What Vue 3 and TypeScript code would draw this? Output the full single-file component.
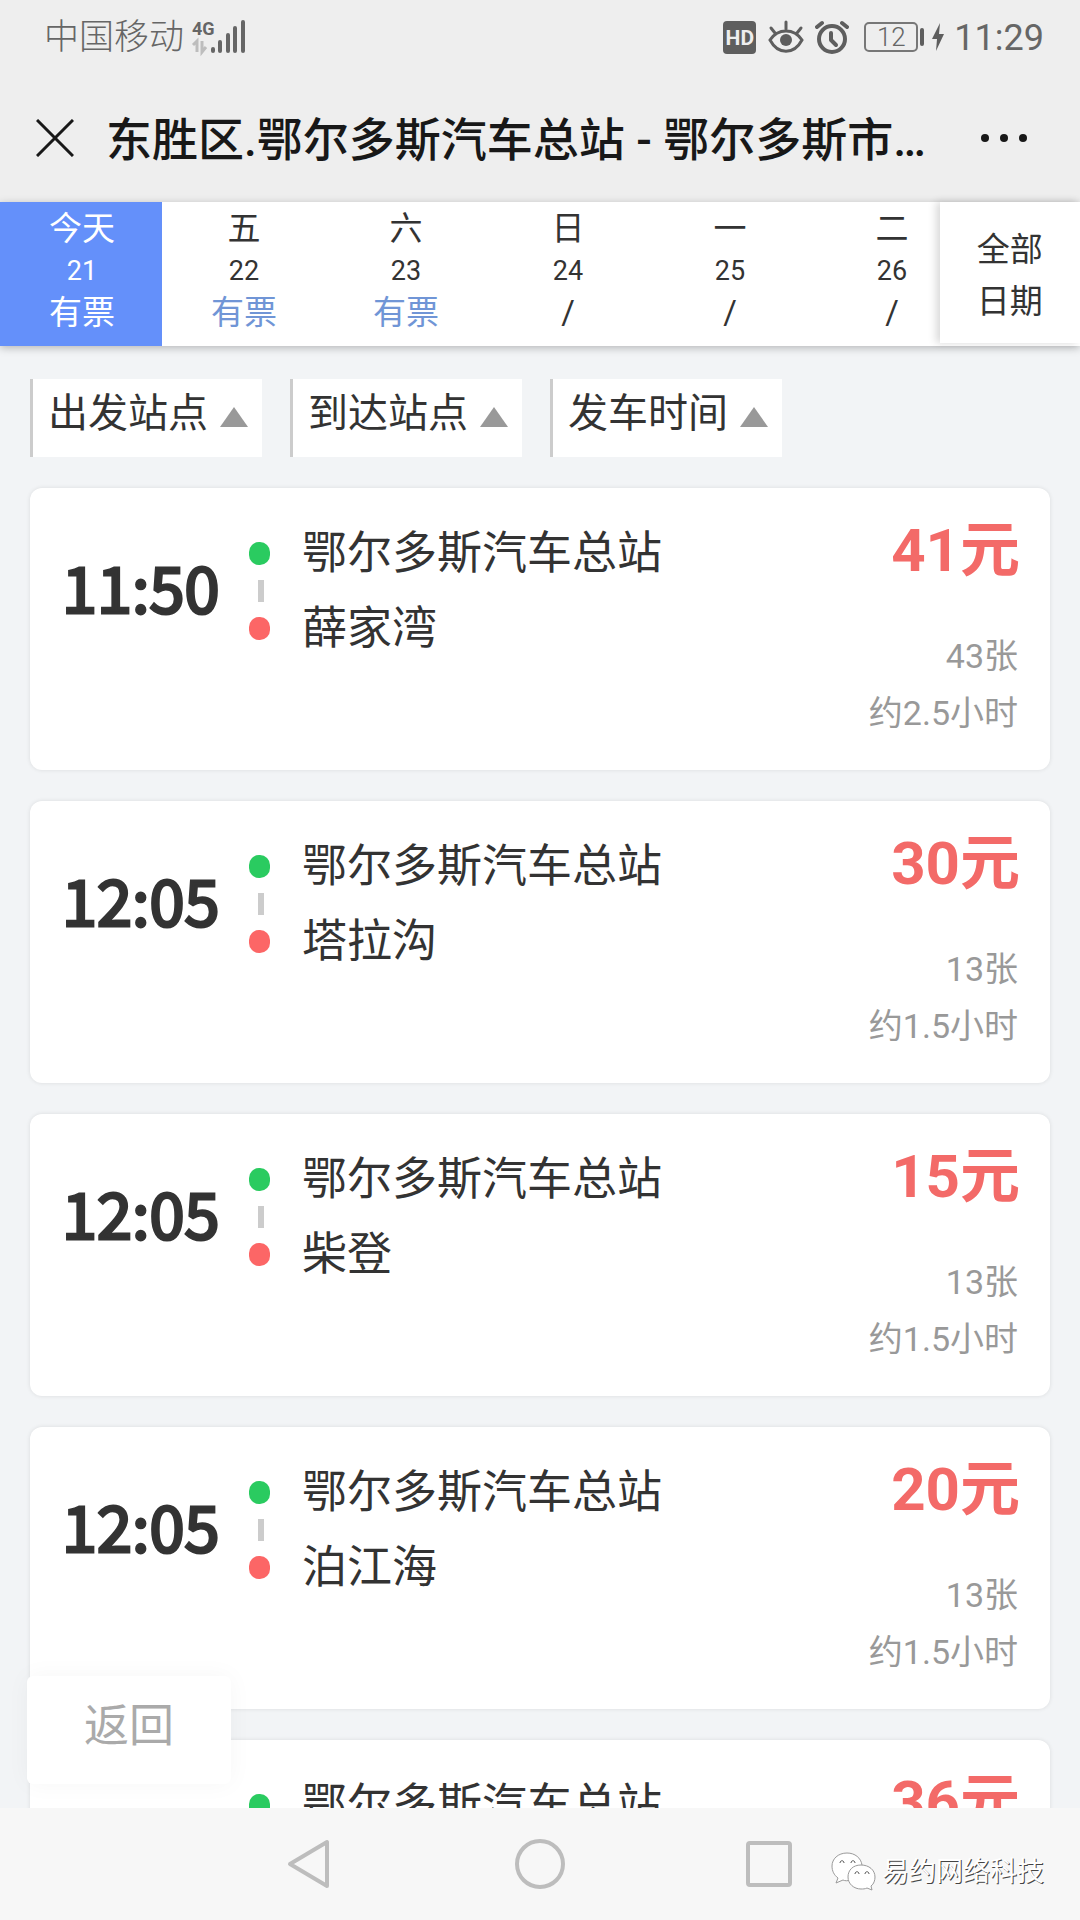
<script setup lang="ts">
interface Day {
  week: string
  date: string
  status: string
  available: boolean
}

interface Trip {
  time?: string
  from: string
  to?: string
  price: number
  tickets?: number
  hours?: string
}

const days: Day[] = [
  { week: '今天', date: '21', status: '有票', available: true },
  { week: '五', date: '22', status: '有票', available: true },
  { week: '六', date: '23', status: '有票', available: true },
  { week: '日', date: '24', status: '/', available: false },
  { week: '一', date: '25', status: '/', available: false },
  { week: '二', date: '26', status: '/', available: false },
]

const filters: string[] = ['出发站点', '到达站点', '发车时间']

const origin = '鄂尔多斯汽车总站'

const trips: Trip[] = [
  { time: '11:50', from: origin, to: '薛家湾', price: 41, tickets: 43, hours: '2.5' },
  { time: '12:05', from: origin, to: '塔拉沟', price: 30, tickets: 13, hours: '1.5' },
  { time: '12:05', from: origin, to: '柴登', price: 15, tickets: 13, hours: '1.5' },
  { time: '12:05', from: origin, to: '泊江海', price: 20, tickets: 13, hours: '1.5' },
  { from: origin, price: 36 },
]
</script>

<template>
  <div class="page">
    <div class="status">
      <span class="carrier">中国移动</span>
      <svg class="signal" width="54" height="34" viewBox="0 0 54 34">
        <text x="0" y="15" class="net">4G</text>
        <path d="M1 25 L5 21 V32 M10 21 V32 L14 27" fill="none" stroke="#bdbdbd" stroke-width="3" />
        <g stroke="#666" stroke-width="4" stroke-linecap="round">
          <path d="M21 29V31M28 22V31M36 15V31M43 8V31M51 2V31" />
        </g>
      </svg>
      <span class="spacer"></span>
      <span class="hd">HD</span>
      <svg class="eye" width="36" height="34" viewBox="0 0 36 34" fill="none" stroke="#5e5e5e" stroke-width="3" stroke-linecap="round">
        <path d="M2 20C10 8 26 8 34 20C26 35 10 35 2 20Z" />
        <circle cx="18" cy="20" r="6" fill="#5e5e5e" stroke="none" />
        <path d="M18 2V9M3 8L7 13M33 8L29 13" />
      </svg>
      <svg class="alarm" width="34" height="34" viewBox="0 0 34 34" fill="none" stroke="#5e5e5e" stroke-linecap="round" stroke-linejoin="round">
        <circle cx="17" cy="19" r="13" stroke-width="4" />
        <path d="M16 13V20L21 25" stroke-width="4" />
        <path d="M2 7L7 3M27 3L32 7" stroke-width="4" />
      </svg>
      <span class="battery">12</span>
      <span class="nub"></span>
      <svg class="bolt" width="14" height="28" viewBox="0 0 14 28"><path d="M9 0L1 16H6L5 28L13 11H8Z" fill="#5e5e5e" /></svg>
      <span class="clock">11:29</span>
    </div>

    <header class="header">
      <button class="icon-btn" aria-label="关闭">
        <svg width="38" height="38" viewBox="0 0 38 38"><path d="M1 1L37 37M37 1L1 37" stroke="#181818" stroke-width="3" /></svg>
      </button>
      <h1 class="title">东胜区.鄂尔多斯汽车总站 - 鄂尔多斯市…</h1>
      <button class="icon-btn more" aria-label="更多">
        <svg width="48" height="10" viewBox="0 0 48 10"><circle cx="5" cy="5" r="4" /><circle cx="24" cy="5" r="4" /><circle cx="43" cy="5" r="4" /></svg>
      </button>
    </header>

    <nav class="dates">
      <button v-for="(d, i) in days" :key="d.date" class="day" :class="{ active: i === 0, open: d.available }">
        <span>{{ d.week }}</span>
        <span class="num">{{ d.date }}</span>
        <span class="state">{{ d.status }}</span>
      </button>
      <button class="all-dates">全部<br />日期</button>
    </nav>

    <main class="content">
      <div class="filters">
        <button v-for="f in filters" :key="f" class="filter">
          <span>{{ f }}</span><i class="arrow"></i>
        </button>
      </div>

      <ul class="trips">
        <li v-for="(t, i) in trips" :key="i" class="trip">
          <time class="depart">{{ t.time }}</time>
          <div class="track"><i class="dot start"></i><i class="link"></i><i class="dot end"></i></div>
          <div class="stations">
            <span>{{ t.from }}</span>
            <span v-if="t.to">{{ t.to }}</span>
          </div>
          <div class="info">
            <strong class="price">{{ t.price }}元</strong>
            <span v-if="t.tickets" class="note">{{ t.tickets }}张</span>
            <span v-if="t.hours" class="note">约{{ t.hours }}小时</span>
          </div>
        </li>
      </ul>

      <button class="back">返回</button>
    </main>

    <footer class="navbar">
      <span></span>
      <button class="key" aria-label="后退">
        <svg width="50" height="50" viewBox="0 0 50 50"><path d="M6 25L43 3V47Z" /></svg>
      </button>
      <button class="key" aria-label="主页">
        <svg width="50" height="50" viewBox="0 0 50 50"><circle cx="25" cy="25" r="23" /></svg>
      </button>
      <button class="key" aria-label="最近任务">
        <svg width="50" height="50" viewBox="0 0 50 50"><rect x="4" y="4" width="42" height="42" rx="2" /></svg>
      </button>
      <div class="brand">
        <svg width="46" height="42" viewBox="0 0 46 42" stroke="#9a9a9a" stroke-width="1" fill="#fff">
          <path d="M16 2C7 2 1 8 1 15C1 20 3 24 7 27L5 32L12 29C14 30 17 30 19 29L31 14C30 7 24 2 16 2Z" />
          <path d="M30 14C22 14 17 19 17 26C17 33 23 38 30 38C32 38 34 38 36 37L41 39L40 35C43 33 44 29 44 26C44 19 38 14 30 14Z" />
          <path d="M9 12C9 9 13 9 13 12M20 12C20 9 24 9 24 12M24 23C24 20 28 20 28 23M34 23C34 20 38 20 38 23" fill="none" stroke="#555" />
        </svg>
        <span>易约网络科技</span>
      </div>
    </footer>
  </div>
</template>

<style>
body {
  margin: 0;
}
</style>

<style scoped>
.page {
  height: 100vh;
  display: flex;
  flex-direction: column;
  background: #f2f4f6;
  color: #333;
  font-family: Roboto, 'Noto Sans CJK SC', sans-serif;
}

button {
  border: 0;
  margin: 0;
  padding: 0;
  background: none;
  font: inherit;
  color: inherit;
}

svg {
  display: block;
}

.status {
  display: flex;
  align-items: center;
  height: 74px;
  padding: 0 36px 0 44px;
  background: #eee;
  color: #666;
}

.carrier {
  padding-top: 2px;
  font-size: 35px;
  font-weight: 300;
  line-height: 40px;
}

.signal {
  margin-left: 8px;
  overflow: visible;
}

.net {
  font-size: 18px;
  font-weight: 700;
  fill: #666;
}

.spacer {
  flex: 1;
}

.hd {
  width: 33px;
  height: 33px;
  border-radius: 4px;
  background: #5e5e5e;
  color: #eee;
  font-size: 21px;
  font-weight: 700;
  line-height: 34px;
  text-align: center;
}

.eye {
  margin-left: 12px;
}

.alarm {
  margin-left: 11px;
}

.battery {
  box-sizing: border-box;
  width: 54px;
  height: 30px;
  margin-left: 15px;
  border: 2px solid #777;
  border-radius: 5px;
  font-size: 26px;
  font-weight: 300;
  line-height: 26px;
  text-align: center;
}

.nub {
  width: 4px;
  height: 18px;
  margin-left: 2px;
  border-radius: 2px;
  background: #5e5e5e;
}

.bolt {
  margin: 0 9px 0 7px;
}

.clock {
  padding-top: 2px;
  font-size: 36px;
  line-height: 42px;
}

.header {
  display: flex;
  align-items: center;
  height: 128px;
  padding: 0 52px 0 36px;
  background: #eee;
  color: #181818;
}

.icon-btn {
  fill: #181818;
}

.title {
  flex: 1;
  margin: 0 0 0 32px;
  padding-top: 4px;
  font-size: 46px;
  font-weight: 500;
  line-height: 64px;
  white-space: nowrap;
}

.dates {
  position: relative;
  z-index: 1;
  display: flex;
  height: 144px;
  background: #fff;
  box-shadow: 0 2px 8px rgba(0, 0, 0, 0.25);
}

.day {
  flex: 0 0 15%;
  box-sizing: border-box;
  display: flex;
  flex-direction: column;
  padding: 6px 0 0 2px;
  font-size: 33px;
  line-height: 42px;
}

.day span {
  width: 100%;
  height: 42px;
}

.day .num {
  font-size: 27px;
}

.open .state {
  color: #7095d6;
}

.active,
.active .state {
  background: #6490fa;
  color: #fff;
}

.all-dates {
  position: absolute;
  top: 0;
  right: 0;
  width: 13%;
  height: 141px;
  padding-top: 6px;
  background: #fff;
  box-shadow: -4px 0 8px rgba(0, 0, 0, 0.15);
  font-size: 33px;
  line-height: 52px;
}

.content {
  position: relative;
  flex: 1;
  min-height: 0;
  overflow: hidden;
  padding: 33px 30px 0;
}

.filters {
  display: flex;
  gap: 28px;
}

.filter {
  display: flex;
  align-items: flex-start;
  height: 78px;
  padding: 0 14px 0 15px;
  border-left: 3px solid #ccc;
  background: #fff;
  font-size: 40px;
  line-height: 70px;
}

.arrow {
  margin: 28px 0 0 12px;
  border: solid transparent;
  border-width: 0 14px 20px;
  border-bottom-color: #999;
}

.trips {
  display: flex;
  flex-direction: column;
  gap: 31px;
  margin: 31px 0 0;
  padding: 0;
  list-style: none;
}

.trip {
  display: flex;
  box-sizing: border-box;
  height: 282px;
  padding: 26px 30px 0 32px;
  border-radius: 12px;
  background: #fff;
  box-shadow: 0 0 4px rgba(0, 0, 0, 0.1);
}

.depart {
  width: 187px;
  font-family: 'Noto Sans CJK SC', sans-serif;
  font-size: 63px;
  -webkit-text-stroke: 3px #333;
  line-height: 144px;
}

.track {
  display: flex;
  flex-direction: column;
  align-items: center;
  gap: 15px;
  width: 21px;
  padding-top: 28px;
}

.dot {
  width: 21px;
  height: 23px;
  border-radius: 10px;
}

.start {
  background: #2acb60;
}

.end {
  background: #fc6666;
}

.link {
  width: 6px;
  height: 22px;
  margin-left: 3px;
  background: #ccc;
}

.stations {
  flex: 1;
  display: flex;
  flex-direction: column;
  margin-left: 32px;
  padding-top: 2px;
  font-size: 45px;
  line-height: 75px;
}

.info {
  display: flex;
  flex-direction: column;
  align-items: flex-end;
}

.price {
  margin-bottom: 40px;
  color: #f36a68;
  font-size: 60px;
  font-weight: 700;
  line-height: 74px;
}

.note {
  margin-right: 2px;
  color: #999;
  font-size: 34px;
  line-height: 57px;
}

.back {
  position: absolute;
  left: 27px;
  bottom: 24px;
  width: 204px;
  height: 108px;
  padding-bottom: 16px;
  border-radius: 6px;
  background: #fff;
  box-shadow: 0 0 24px rgba(0, 0, 0, 0.04);
  color: #aaa;
  font-size: 45px;
}

.navbar {
  display: grid;
  grid-template-columns: 177fr 264fr 198fr 260fr 181fr;
  align-items: center;
  justify-items: center;
  position: relative;
  height: 112px;
  background: #f7f7f7;
}

.key svg {
  fill: none;
  stroke: #bdbdbd;
  stroke-width: 4;
  stroke-linejoin: round;
}

.brand {
  position: absolute;
  right: 36px;
  top: 40px;
  display: flex;
  align-items: center;
  gap: 5px;
  color: #fff;
  font-size: 27px;
  line-height: 48px;
  text-shadow: 1px 1px 0 #444;
}
</style>
